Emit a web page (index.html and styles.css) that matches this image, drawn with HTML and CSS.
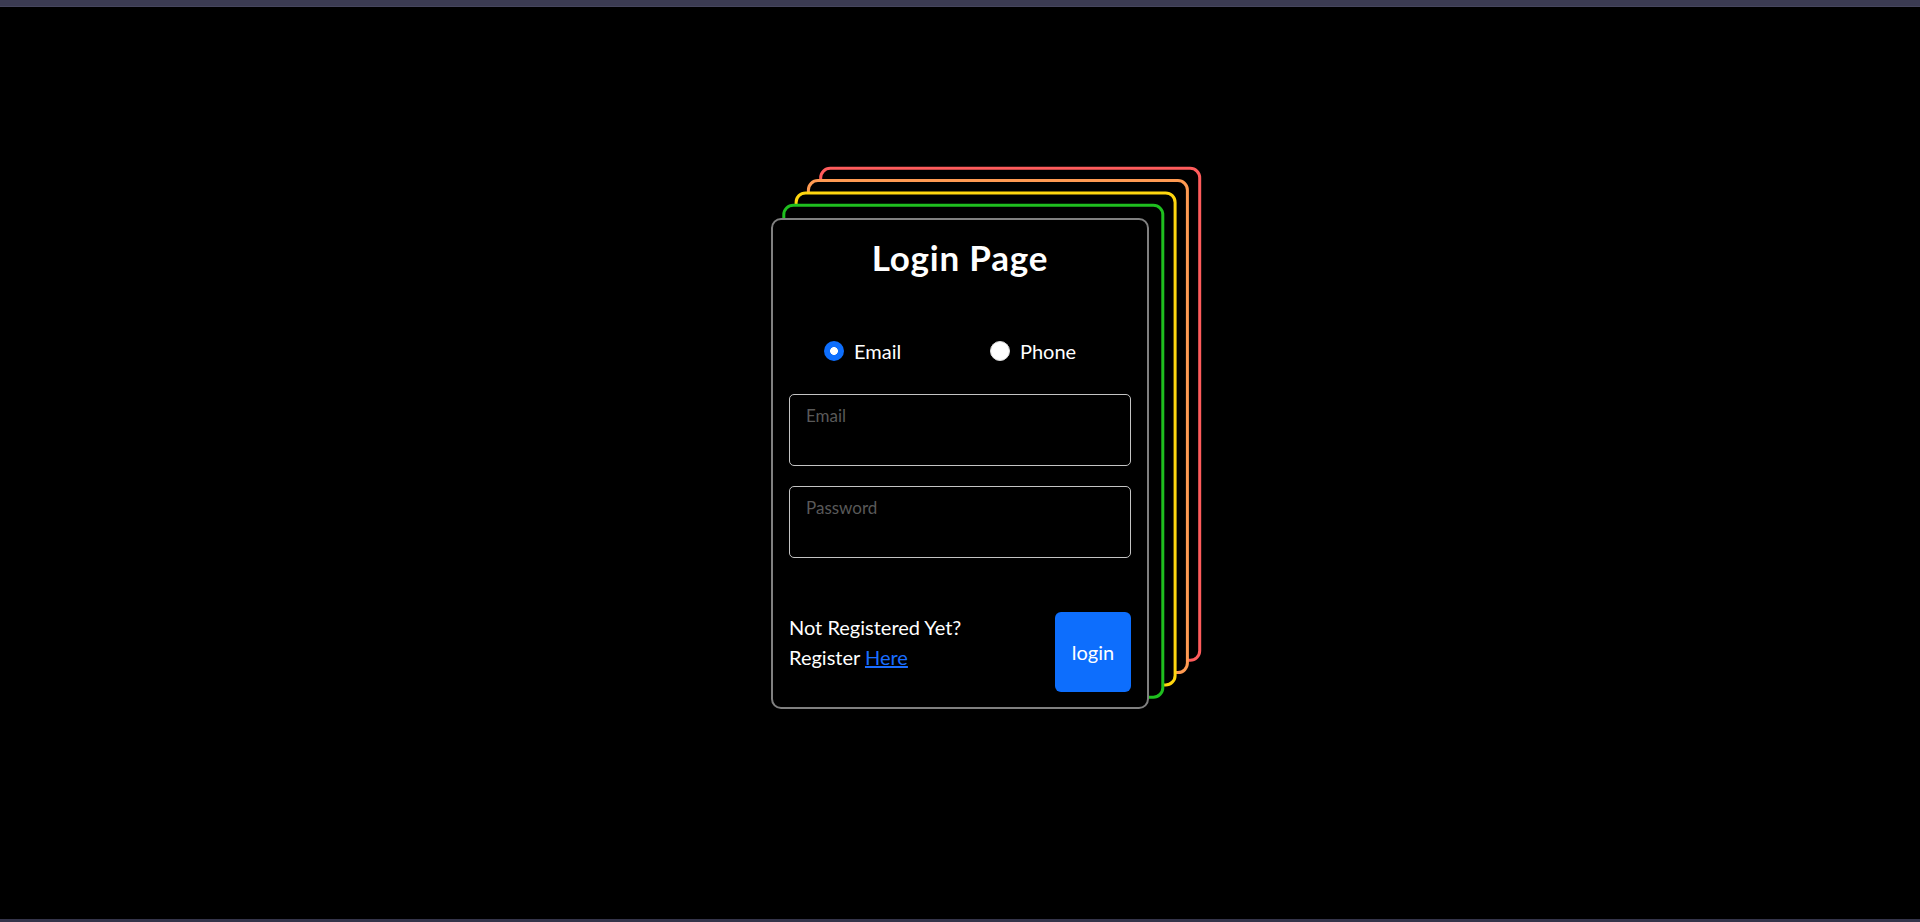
FILE: index.html
```html
<!DOCTYPE html>
<html lang="en">
<head>
<meta charset="utf-8">
<title>Login Page</title>
<link rel="stylesheet" href="styles.css">
</head>
<body>
<div class="topbar"></div>
<main class="stage">
  <div class="stack">
    <div class="layer layer-4"></div>
    <div class="layer layer-3"></div>
    <div class="layer layer-2"></div>
    <div class="layer layer-1"></div>
    <form class="card">
      <h3 class="title">Login Page</h3>
      <div class="radios">
        <label class="radio-item radio-email">
          <input type="radio" name="mode" class="radio" checked>
          <span class="radio-text">Email</span>
        </label>
        <label class="radio-item">
          <input type="radio" name="mode" class="radio">
          <span class="radio-text">Phone</span>
        </label>
      </div>
      <input class="field" type="email" placeholder="Email">
      <input class="field field-pass" type="password" placeholder="Password">
      <div class="footer">
        <p class="register">Not Registered Yet?<br>Register <a href="#" class="link">Here</a></p>
        <button type="button" class="btn">login</button>
      </div>
    </form>
  </div>
</main>
<div class="bottombar"></div>
</body>
</html>
```
FILE: styles.css
```css
* { box-sizing: border-box; }
html, body { height: 100%; }
body {
  margin: 0;
  background: #000;
  color: #fff;
  font-family: Lato, "Open Sans", sans-serif;
  font-size: 20px;
  line-height: 30px;
  display: flex;
  flex-direction: column;
  overflow: hidden;
}
.topbar { height: 7px; background: #3b3b52; border-bottom: 1px solid #46465e; flex: none; }
.bottombar { height: 3px; background: #34344a; flex: none; }
.stage {
  flex: 1;
  display: flex;
  align-items: center;
  justify-content: center;
}
.stack { position: relative; width: 378px; }
.layer {
  position: absolute;
  left: -1px;
  top: -1.5px;
  width: 382px;
  height: 495px;
  border: 3px solid;
  border-radius: 11px;
  background: #000;
}
.layer-1 { border-color: #1fbf1f; transform: translate(12.3px, -12.3px); }
.layer-2 { border-color: #ffd60f; transform: translate(24.6px, -24.6px); }
.layer-3 { border-color: #ff9a52; transform: translate(36.9px, -36.9px); }
.layer-4 { border-color: #ff5c5c; transform: translate(49.2px, -49.2px); }
.card {
  position: relative;
  width: 378px;
  border: 2px solid #808080;
  border-radius: 10px;
  background: #000;
  padding: 16px 16px 15px;
  display: flex;
  flex-direction: column;
}
.title {
  margin: 0;
  font-size: 35px;
  line-height: 42px;
  font-weight: 700;
  letter-spacing: 0.8px;
  text-align: center;
}
.radios {
  display: flex;
  margin-top: 58px;
  padding-left: 35px;
  height: 30px;
}
.radio-item { display: flex; align-items: center; }
.radio-email { width: 166px; }
.radio {
  appearance: none;
  -webkit-appearance: none;
  margin: 0 10px 0 0;
  width: 20px;
  height: 20px;
  border-radius: 50%;
  background: #fff;
  border: 1px solid #dcdcdc;
}
.radio:checked { background: radial-gradient(circle, #fff 0 3.6px, #0d6efd 4.2px); border: none; }
.radio-text { font-size: 20px; }
.field {
  display: block;
  width: 100%;
  height: 72px;
  margin-top: 28px;
  padding: 10px 16px 38px;
  background: #000;
  border: 1px solid #c4c4c4;
  border-radius: 5px;
  color: #fff;
  font-family: Lato, "Open Sans", sans-serif;
  font-size: 17px;
  outline: none;
}
.field::placeholder { color: #595959; }
.field-pass { margin-top: 20px; }
.footer {
  display: flex;
  justify-content: space-between;
  align-items: flex-start;
  margin-top: 54px;
}
.register { margin: 0; font-size: 20px; line-height: 30px; }
.link { color: #1a6dff; text-decoration: underline; }
.btn {
  width: 76px;
  height: 80px;
  border: none;
  border-radius: 6px;
  background: #0d6efd;
  color: #fff;
  font-family: Lato, "Open Sans", sans-serif;
  font-size: 20px;
  padding: 0;
}
```
